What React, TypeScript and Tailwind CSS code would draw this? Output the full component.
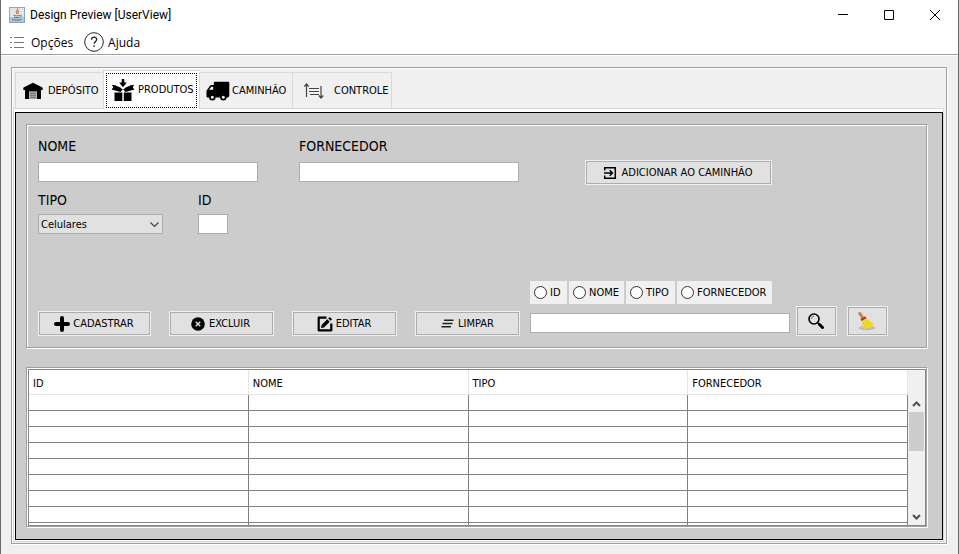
import type { ReactNode } from "react";

const etched =
  "border border-[#a0a0a0] shadow-[inset_1px_1px_0_#fff,1px_1px_0_#fff]";
const field = "h-5 border border-[#abadb3] bg-white px-1 text-[11px] outline-none";

function HouseIcon() {
  return (
    <svg width="20" height="18" viewBox="0 0 20 18">
      <path d="M10 .8 19 5.300c.5.300.7.700.7 1.200V8H18v9h-4V9.500H6V17H2V8H.3V6.500c0-.5.2-.9.7-1.200z" fill="#000" />
      <path d="M6.500 10h7v7h-7z" fill="#999" />
      <path d="M6.500 11.500h7M6.500 13.500h7M6.500 15.500h7" stroke="#777" strokeWidth="0.700" />
    </svg>
  );
}

function BoxIcon() {
  return (
    <svg width="24" height="24" viewBox="0 0 24 24" fill="#000">
      <path d="M10.700 1h2.600v3.500h2.500L12 9.300 8.200 4.500h2.500z" />
      <path d="M4 7.300 9.300 9.500 11.800 11.500 9.500 14 .5 11.500zM20 7.300 14.700 9.500 12.200 11.500 14.500 14l9-2.500z" />
      <path d="m.8 6.800 3.700.7 2.500 3-3.500 1zM23.200 6.800l-3.700.7-2.500 3 3.500 1z" />
      <path d="M3.500 14.500h7.800V23H3.500zM12.800 14.500h7.700V23h-7.700z" />
    </svg>
  );
}

function TruckIcon() {
  return (
    <svg width="24" height="20" viewBox="0 0 24 20">
      <path
        d="M9 .8h13c.8 0 1.300.5 1.300 1.300V14c0 1.500-.8 2.500-1.800 2.500H2C1 16.500.500 16 .5 15.200V10.300c0-.6.2-1 .5-1.400L4 4.700c.4-.4.800-.7 1.400-.7h2.400V2c0-.7.500-1.200 1.200-1.200z"
        fill="#000"
      />
      <path d="M5.300 5.700h1.900v3H3z" fill="#f0f0f0" />
      <circle cx="6.300" cy="16.300" r="2.400" fill="#f0f0f0" stroke="#000" strokeWidth="1.700" />
      <circle cx="17.300" cy="16.300" r="2.400" fill="#f0f0f0" stroke="#000" strokeWidth="1.700" />
    </svg>
  );
}

function SortIcon() {
  return (
    <svg width="20" height="16" viewBox="0 0 20 16" fill="none" stroke="#444">
      <path d="M2.500 14V1M.3 3.500 2.500 1l2.200 2.500M17 3v12M14.800 12.500 17 15l2.200-2.500" strokeWidth="1.200" />
      <path d="M5 5.500h10M5 8.500h10M6 11.500h9" strokeWidth="1.200" />
    </svg>
  );
}

function JavaIcon() {
  return (
    <svg width="16" height="16" viewBox="0 0 16 16" fill="none">
      <rect x="0.500" y="0.500" width="15" height="15" fill="#dfe6ec" stroke="#8fa5b8" />
      <path d="M1 10h14v5H1z" fill="#b4c5d4" />
      <path d="M8.500 1.500c1.500 1.500-2.500 2.500-1 4.500l.8 1M10 4c-1.500 1-1.500 1.500-.5 3" stroke="#e8711a" strokeWidth="1.200" />
      <path d="M4.500 8.300c1.500.8 5 .8 6.500 0M5 10.200c1.500.7 4 .7 5.500 0M3 12.300c2 1.200 7.500 1.200 9.500 0M11.300 8.300c1.700-.4 1.700 1.400 0 2" stroke="#47708f" strokeWidth="0.900" />
    </svg>
  );
}

function BroomIcon() {
  return (
    <svg width="20" height="20" viewBox="0 0 20 20">
      <ellipse cx="10" cy="17" rx="8.500" ry="2.200" fill="#bbb" />
      <path d="M1.300 1.800C2 .6 3.500.6 4.300 1.700L7 6.300 4.600 7.700 1.500 3.500z" fill="#c08a4a" />
      <path d="M4.300 8.500 9 6.200l7.500 6.500c.8.700 1 1.300.3 1.800-2.300 1.700-5.500 3-9.300 3.200-1.500 0-1.800-.7-1.900-1.700z" fill="#f2dc32" />
      <path d="m6 11 2.500 6M8 10l4 6.500M9.500 9l5.500 6" stroke="#dcbd1c" strokeWidth="0.700" />
      <path d="m4 9 4.800-2.700" stroke="#c52c2c" strokeWidth="2.200" />
    </svg>
  );
}

function Tab({ icon, label, className }: { icon: ReactNode; label: string; className: string }) {
  return (
    <button
      type="button"
      role="tab"
      className={`flex shrink-0 items-center whitespace-nowrap border-[#d9d9d9] ${className}`}
    >
      {icon}
      {label}
    </button>
  );
}

function PushButton({
  icon,
  label,
  title,
  className,
}: {
  icon: ReactNode;
  label?: string;
  title?: string;
  className: string;
}) {
  return (
    <button
      type="button"
      aria-label={title}
      className={`flex shrink-0 items-center justify-center whitespace-nowrap border border-[#adadad] bg-[#e1e1e1] outline outline-[#f0f0f0] ${className}`}
    >
      {icon}
      {label}
    </button>
  );
}

function Radio({ label, className }: { label: string; className: string }) {
  return (
    <label className={`flex h-[23px] items-center gap-[3px] bg-[#f0f0f0] pl-1 ${className}`}>
      <input
        type="radio"
        name="filtro"
        className="size-[13px] shrink-0 appearance-none rounded-full border border-[#333] bg-white checked:bg-[#333]"
      />
      {label}
    </label>
  );
}

const columns = ["ID", "NOME", "TIPO", "FORNECEDOR"];
const emptyRows = Array.from({ length: 9 }, (_, i) => i);

export default function App() {
  return (
    <div className="flex h-screen flex-col overflow-hidden border-x border-[#6b6b6b] bg-[#f0f0f0] font-['DejaVu_Sans_Condensed','DejaVu_Sans',sans-serif] text-[11px] leading-4 text-black">
      <header className="border-b border-[#a0a0a0] bg-white font-['Open_Sans',sans-serif] text-[12px] shadow-[0_1px_0_#fff]">
        <div className="flex h-[30px] items-center pl-2">
          <JavaIcon />
          <h1 className="ml-[5px] flex-1 font-['Roboto',sans-serif]">Design Preview [UserView]</h1>
          <button type="button" aria-label="Minimizar" className="flex h-full w-[46px] items-center justify-center">
            <svg width="10" height="10" stroke="#000"><path d="M0 4.500h10" /></svg>
          </button>
          <button type="button" aria-label="Maximizar" className="flex h-full w-[46px] items-center justify-center">
            <svg width="10" height="10" fill="none" stroke="#000"><path d="M.5.500h9v9h-9z" /></svg>
          </button>
          <button type="button" aria-label="Fechar" className="flex h-full w-[46px] items-center justify-center">
            <svg width="10" height="10" stroke="#000"><path d="m0 0 10 10M10 0 0 10" /></svg>
          </button>
        </div>
        <nav className="flex h-6 items-center pl-[9px]">
          <button type="button" className="flex items-center gap-[7px]">
            <svg width="14" height="13" viewBox="0 0 14 13" stroke="#777">
              <path d="M0 1.500h2M4 1.500h10M0 6.500h2M4 6.500h10M0 11.500h2M4 11.500h10" />
            </svg>
            <span className="pt-px">Opções</span>
          </button>
          <button type="button" className="ml-[11px] flex items-center gap-1">
            <svg width="20" height="20" viewBox="0 0 20 20" fill="none" stroke="#222">
              <circle cx="10" cy="10" r="9.300" />
              <path d="M7.500 7.800c0-3.600 5.200-3.400 5.200-.4 0 2-2.600 2-2.600 4.300" strokeWidth="1.300" />
              <path d="M10 13.300v1.500" strokeWidth="1.500" />
            </svg>
            <span className="pt-px">Ajuda</span>
          </button>
        </nav>
      </header>

      <main className="flex min-h-0 flex-1 flex-col pt-3 pr-[11px] pb-[10px] pl-[10px]">
        <div className={`flex min-h-0 flex-1 flex-col pt-[2px] pr-[2px] pb-px pl-px ${etched}`}>
          <div role="tablist" className="flex h-[38px] shrink-0 items-end pl-[2px]">
            <Tab icon={<HouseIcon />} label="DEPÓSITO" className="h-9 w-[88px] gap-[5px] border-t border-l pt-px pl-[7px]" />
            <Tab
              icon={<BoxIcon />}
              label="PRODUTOS"
              className="relative -mb-px h-[39px] w-[96px] gap-[3px] border-t border-l bg-white pb-px pl-[7px] after:absolute after:inset-x-[2px] after:top-[2px] after:bottom-px after:border after:border-dotted after:border-black"
            />
            <Tab icon={<TruckIcon />} label="CAMINHÃO" className="h-9 w-[93px] gap-[2px] border-t border-l pt-px pl-[6px]" />
            <Tab icon={<SortIcon />} label="CONTROLE" className="h-9 w-[100px] gap-[10px] border-x border-t pt-px pl-[11px]" />
          </div>

          <div className="flex min-h-0 flex-1 flex-col border border-[#d9d9d9] bg-white pt-[3px] pb-px pl-px">
            <div className="flex min-h-0 flex-1 flex-col gap-[19px] border border-black bg-[#ccc] pt-[11px] pr-[15px] pb-3 pl-[10px]">
              <form className={`flex shrink-0 flex-col pt-3 pb-[11px] pl-[11px] ${etched}`}>
                <div className="flex h-12 items-start text-[14px]">
                  <div className="flex w-[220px] flex-col gap-[7px]">
                    <label htmlFor="nome" className="leading-[18px]">NOME</label>
                    <input id="nome" className={field} />
                  </div>
                  <div className="ml-[41px] flex w-[220px] flex-col gap-[7px]">
                    <label htmlFor="fornecedor" className="leading-[18px]">FORNECEDOR</label>
                    <input id="fornecedor" className={field} />
                  </div>
                  <PushButton
                    className="mt-6 ml-[67px] h-[23px] w-[185px] gap-[5px] pr-[2px] text-[11px]"
                    label="ADICIONAR AO CAMINHÃO"
                    icon={
                      <svg width="14" height="14" viewBox="0 0 14 14" fill="none" stroke="#000" strokeWidth="1.500">
                        <path d="M1.700 4.500V1.700h10.600v10.600H1.700V9.500M1 7h8M6.700 4.300 9.400 7 6.700 9.700" />
                      </svg>
                    }
                  />
                </div>

                <div className="mt-[6px] flex text-[14px]">
                  <div className="flex w-[125px] flex-col gap-[5px]">
                    <label htmlFor="tipo" className="leading-[18px]">TIPO</label>
                    <div className="relative">
                      <select id="tipo" className="block h-5 w-full appearance-none border border-[#adadad] bg-[#e1e1e1] pt-px pl-[2px] text-[11px] leading-4 outline-none">
                        <option>Celulares</option>
                      </select>
                      <svg className="pointer-events-none absolute top-2 right-1" width="9" height="6" fill="none" stroke="#444" strokeWidth="1.200">
                        <path d="m.5.500 4 4 4-4" />
                      </svg>
                    </div>
                  </div>
                  <div className="ml-[35px] flex w-[30px] flex-col gap-[5px]">
                    <label htmlFor="id" className="leading-[18px]">ID</label>
                    <input id="id" className={field} />
                  </div>
                </div>

                <div className="mt-[47px] flex items-end">
                  <div className="mb-px ml-px flex gap-5">
                    <PushButton
                      className="h-[23px] w-[111px] gap-[3px] pr-px"
                      label="CADASTRAR"
                      icon={<svg width="16" height="16" stroke="#000" strokeWidth="4" strokeLinecap="round"><path d="M8 2v12M2 8h12" /></svg>}
                    />
                    <PushButton
                      className="h-[23px] w-[103px] gap-1 pr-[2px]"
                      label="EXCLUIR"
                      icon={
                        <svg width="14" height="14" viewBox="0 0 14 14">
                          <circle cx="7" cy="7" r="6.800" />
                          <path d="m4.700 4.700 4.600 4.600M9.300 4.700 4.700 9.300" stroke="#e1e1e1" strokeWidth="1.400" />
                        </svg>
                      }
                    />
                    <PushButton
                      className="h-[23px] w-[103px] gap-[3px] pr-px"
                      label="EDITAR"
                      icon={
                        <svg width="16" height="16" viewBox="0 0 16 16">
                          <path d="M9.500 1.700H1.700v12.600h12.600V7.500" fill="none" stroke="#000" strokeWidth="2.200" strokeLinejoin="round" />
                          <path d="M4 12 4.600 9 10.300 3.300l2.400 2.400L7 11.400zM11.200 2.400l1.500-1.500 2.400 2.400-1.500 1.500z" />
                        </svg>
                      }
                    />
                    <PushButton
                      className="h-[23px] w-[103px] gap-1"
                      label="LIMPAR"
                      icon={
                        <svg width="13" height="9" viewBox="0 0 13 9" stroke="#222" strokeWidth="1.600">
                          <path d="M3 1.200h9.500M1.500 4.500H11.500M.5 7.800H10" />
                        </svg>
                      }
                    />
                  </div>
                  <div className="mb-[3px] ml-[11px] flex w-[260px] flex-col gap-[9px]">
                    <div className="flex gap-[2px]">
                      <Radio label="ID" className="w-[37px]" />
                      <Radio label="NOME" className="w-[55px]" />
                      <Radio label="TIPO" className="w-[49px]" />
                      <Radio label="FORNECEDOR" className="w-[95px]" />
                    </div>
                    <input aria-label="Pesquisar" className={field} />
                  </div>
                  <PushButton
                    className="mb-px ml-[7px] h-7 w-[39px] pr-px"
                    title="Buscar"
                    icon={
                      <svg width="16" height="16" viewBox="0 0 16 16" fill="none" stroke="#000">
                        <circle cx="6" cy="6" r="5" strokeWidth="1.600" />
                        <path d="M3.300 6c0-1.500 1.200-2.700 2.700-2.700" stroke="#777" />
                        <path d="m9.500 9.500 2 2" strokeWidth="1.500" />
                        <path d="m11.500 11.500 3 3" strokeWidth="3" strokeLinecap="round" />
                      </svg>
                    }
                  />
                  <PushButton className="mb-px ml-3 h-7 w-[39px] pr-px" title="Limpar busca" icon={<BroomIcon />} />
                </div>
              </form>

              <div className={`flex min-h-0 flex-1 flex-col pt-px pl-px ${etched}`}>
                <div className="flex min-h-0 flex-1 border border-[#828790] bg-white">
                  <div className="min-w-0 flex-1 overflow-hidden">
                    <table className="w-full table-fixed border-separate border-spacing-0">
                      <thead>
                        <tr>
                          {columns.map((name) => (
                            <th
                              key={name}
                              className="h-[25px] border-r border-b border-[#e5e5e5] p-0 pt-[3px] pl-1 text-left font-normal"
                            >
                              {name}
                            </th>
                          ))}
                        </tr>
                      </thead>
                      <tbody>
                        {emptyRows.map((row) => (
                          <tr key={row}>
                            {columns.map((name) => (
                              <td key={name} className="h-4 border-r border-b border-[#808080] p-0" />
                            ))}
                          </tr>
                        ))}
                      </tbody>
                    </table>
                  </div>
                  <div className="flex w-[17px] flex-col items-center bg-[#f0f0f0] pt-[31px] pb-[5px]">
                    <svg width="9" height="6" fill="none" stroke="#505050" strokeWidth="2">
                      <path d="m1 5 3.500-3.500L8 5" />
                    </svg>
                    <div className="mt-[5px] h-[39px] w-[15px] bg-[#cdcdcd]" />
                    <svg className="mt-auto" width="9" height="6" fill="none" stroke="#505050" strokeWidth="2">
                      <path d="m1 1 3.500 3.500L8 1" />
                    </svg>
                  </div>
                </div>
              </div>
            </div>
          </div>
        </div>
      </main>
    </div>
  );
}
